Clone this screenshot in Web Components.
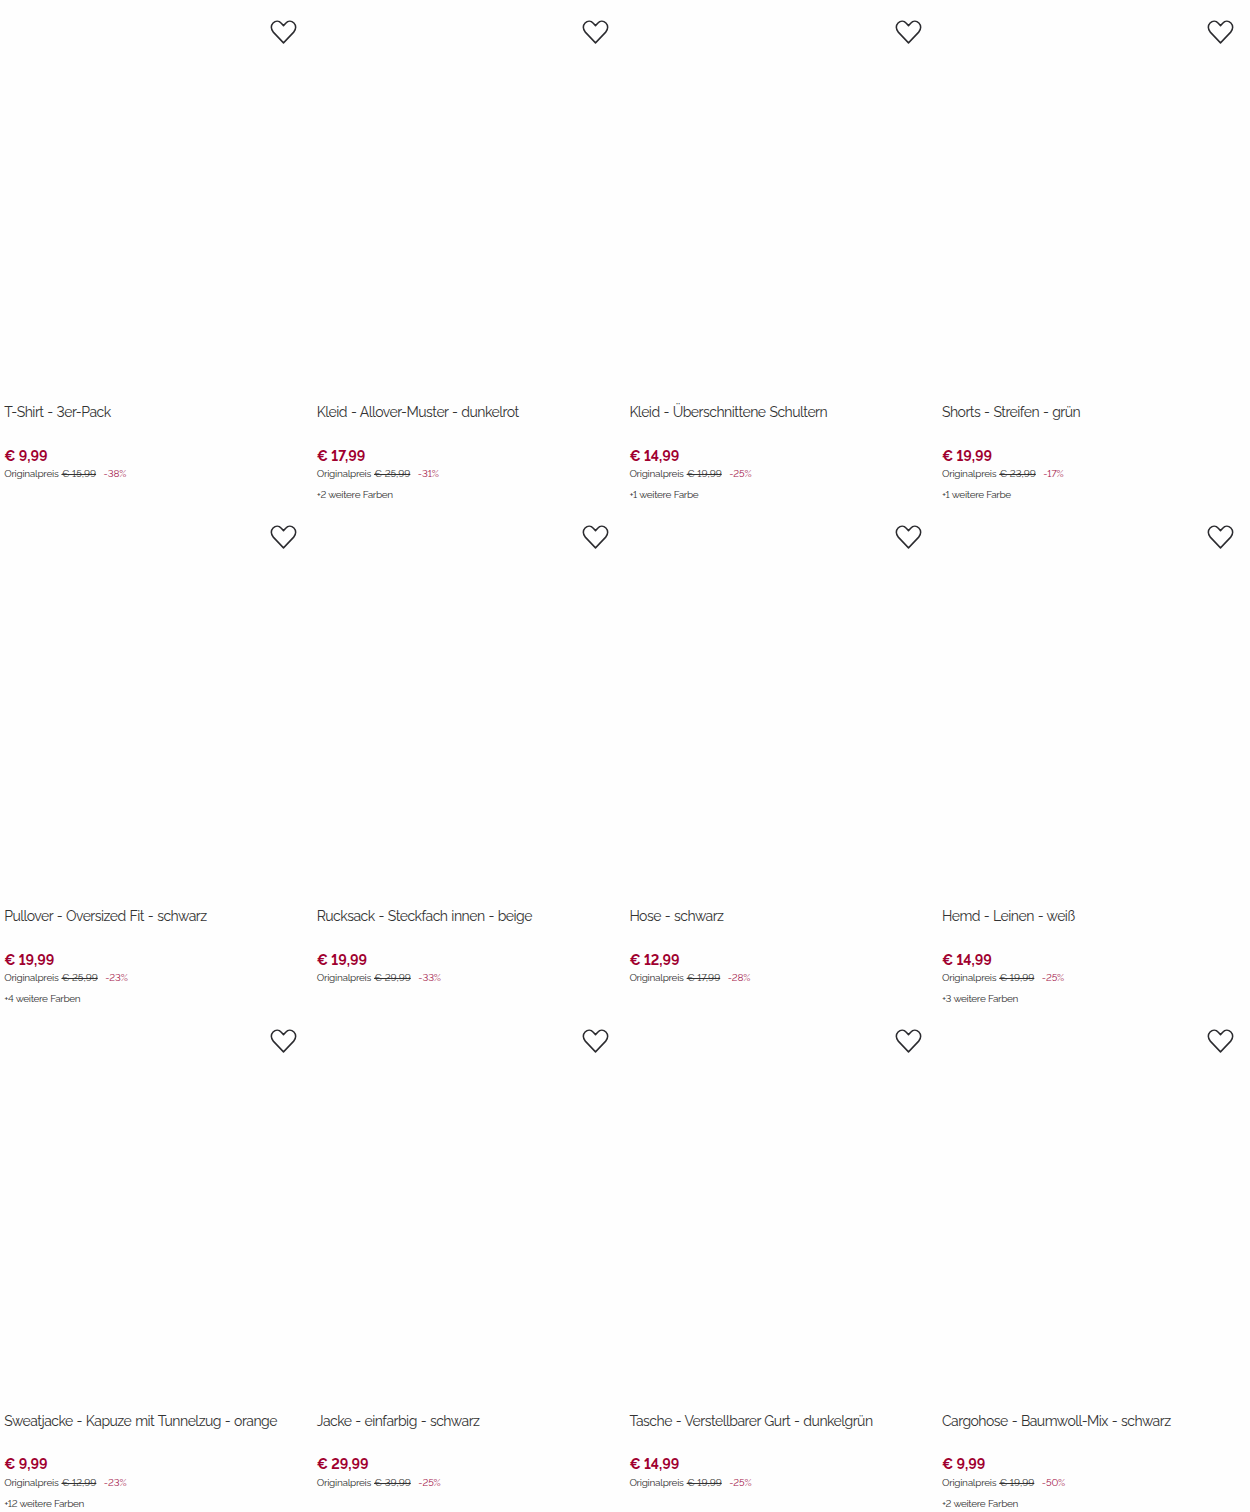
<!DOCTYPE html>
<html lang="de">
  <head>
    <meta charset="utf-8">
    <title>Produkte</title>
    <style>
      body {
        margin: 0;
        background: #fefefe;
        color: #333;
        font-family: Raleway, Lato, "Open Sans", sans-serif;
        font-variant-numeric: lining-nums;
      }
    </style>
  </head>

  <body>
    <product-grid></product-grid>

    <template id="heart-template">
      <style>
        :host { display: block; width: 27px; height: 24px; }
        svg { display: block; }
        path { fill: #fff; stroke: #2b2b2f; stroke-width: 1.6; stroke-linejoin: round; }
      </style>
      <svg width="27" height="24" viewBox="0 0 28 24" preserveAspectRatio="none">
        <path d="M14 22.9 L3.4 12.1 C.7 9.3 .8 5.3 3.2 3 C5.8 .6 9.4 .8 11.7 3.2 L14 5.6 L16.3 3.2 C18.6 .8 22.2 .6 24.8 3 C27.2 5.3 27.3 9.3 24.6 12.1 Z"/>
      </svg>
    </template>

    <template id="card-template">
      <style>
        :host { display: flex; flex-direction: column; height: 504.3px; }
        .picture { display: flex; justify-content: flex-end; align-items: flex-start; height: 382px; padding: 20.3px 15.9px 0 0; box-sizing: border-box; }
        .info { padding: 20px 0 0 4.2px; }
        .title { height: 43.6px; font-size: 14px; line-height: 20px; letter-spacing: -.51px; word-spacing: .8px; }
        .price { color: #a0002f; font-size: 14px; font-weight: 700; line-height: 20px; height: 20px; }
        .was { display: flex; font-size: 10px; line-height: 16px; height: 16px; padding-top: .4px; }
        .label { width: 57.3px; letter-spacing: -.28px; }
        .old { text-decoration: line-through; }
        .discount { margin-left: 7.5px; color: #a5204c; letter-spacing: -.1px; }
        .more { font-size: 10px; line-height: 16px; margin-top: 5px; letter-spacing: -.34px; word-spacing: .4px; }
      </style>
      <div class="picture"><heart-icon></heart-icon></div>
      <div class="info">
        <div class="title"><slot name="title"></slot></div>
        <div class="price"><slot name="price"></slot></div>
        <div class="was">
          <span class="label">Originalpreis</span>
          <span class="old"><slot name="old"></slot></span>
          <span class="discount"><slot name="discount"></slot></span>
        </div>
        <div class="more"><slot name="more"></slot></div>
      </div>
    </template>

    <template id="grid-template">
      <style>
        :host {
          display: grid;
          grid-template-columns: repeat(4, 312.6px);
          height: 1512px;
          overflow: hidden;
        }
      </style>
    </template>

    <script>
      const clone = id => document.getElementById(id).content.cloneNode(true);

      class HeartIcon extends HTMLElement {
        connectedCallback() {
          this.attachShadow({ mode: 'open' });
          this.shadowRoot.append(clone('heart-template'));
        }
      }

      class ProductCard extends HTMLElement {
        connectedCallback() {
          this.attachShadow({ mode: 'open' });
          this.shadowRoot.append(clone('card-template'));
        }
      }

      // title, price, old price, discount, further colours
      const products = [
        ['T-Shirt - 3er-Pack', '€ 9,99', '€ 15,99', '-38%'],
        ['Kleid - Allover-Muster - dunkelrot', '€ 17,99', '€ 25,99', '-31%', '+2 weitere Farben'],
        ['Kleid - Überschnittene Schultern', '€ 14,99', '€ 19,99', '-25%', '+1 weitere Farbe'],
        ['Shorts - Streifen - grün', '€ 19,99', '€ 23,99', '-17%', '+1 weitere Farbe'],
        ['Pullover - Oversized Fit - schwarz', '€ 19,99', '€ 25,99', '-23%', '+4 weitere Farben'],
        ['Rucksack - Steckfach innen - beige', '€ 19,99', '€ 29,99', '-33%'],
        ['Hose - schwarz', '€ 12,99', '€ 17,99', '-28%'],
        ['Hemd - Leinen - weiß', '€ 14,99', '€ 19,99', '-25%', '+3 weitere Farben'],
        ['Sweatjacke - Kapuze mit Tunnelzug - orange', '€ 9,99', '€ 12,99', '-23%', '+12 weitere Farben'],
        ['Jacke - einfarbig - schwarz', '€ 29,99', '€ 39,99', '-25%'],
        ['Tasche - Verstellbarer Gurt - dunkelgrün', '€ 14,99', '€ 19,99', '-25%'],
        ['Cargohose - Baumwoll-Mix - schwarz', '€ 9,99', '€ 19,99', '-50%', '+2 weitere Farben'],
      ];
      const slots = ['title', 'price', 'old', 'discount', 'more'];

      class ProductGrid extends HTMLElement {
        connectedCallback() {
          this.attachShadow({ mode: 'open' });
          this.shadowRoot.append(clone('grid-template'));
          for (const product of products) {
            const card = document.createElement('product-card');
            card.innerHTML = product.map((text, i) =>
              `<span slot="${slots[i]}">${text}</span>`
            ).join('');
            this.shadowRoot.append(card);
          }
        }
      }

      customElements.define('heart-icon', HeartIcon);
      customElements.define('product-card', ProductCard);
      customElements.define('product-grid', ProductGrid);
    </script>
  </body>
</html>
